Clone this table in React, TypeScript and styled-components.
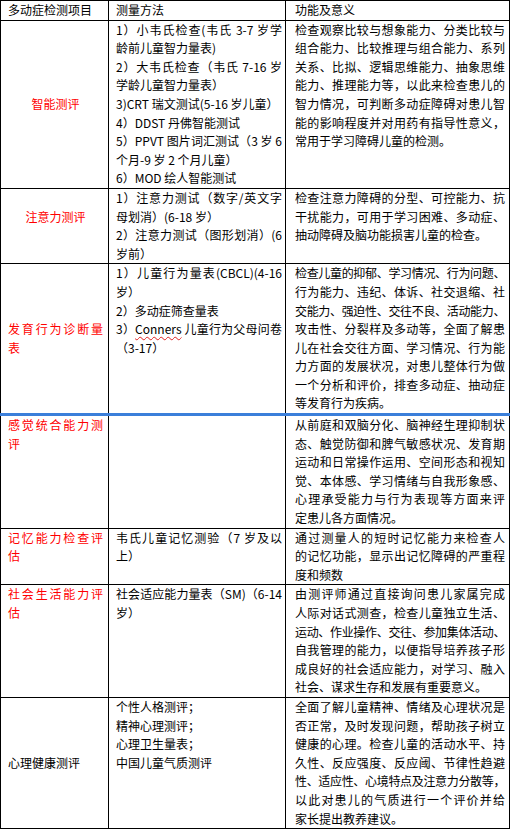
import styled, { createGlobalStyle } from "styled-components";

const LINE = 18.6;

const GlobalStyle = createGlobalStyle`
  html, body {
    margin: 0;
    padding: 0;
    background: #fff;
  }
  body {
    font-family: "Noto Sans CJK SC", "Noto Sans", sans-serif;
  }
`;

const Table = styled.table`
  width: 509px;
  table-layout: fixed;
  border-collapse: collapse;
  font-size: 12px;
  line-height: ${LINE}px;
  color: #000;
`;

const Row = styled.tr<{ $marked?: boolean }>`
  & > td {
    border-top: ${p => (p.$marked ? "3px solid #3b7fda" : "1px solid #000")};
  }
`;

const BaseCell = styled.td`
  border: 1px solid #000;
  vertical-align: top;
  padding: 0;
`;

const HeadCell = styled(BaseCell)<{ $left: number }>`
  padding-left: ${p => p.$left}px;
  white-space: nowrap;
`;

const LabelCell = styled(BaseCell)<{ $lead: number; $center?: boolean; $red?: boolean }>`
  padding: ${p => p.$lead * LINE}px 5px 0 7px;
  color: ${p => (p.$red ? "#ff0000" : "#000")};
  text-align: ${p => (p.$center ? "center" : "left")};
`;

const MethodCell = styled(BaseCell)`
  padding: 0 3px 0 7px;
`;

const MeaningCell = styled(BaseCell)`
  padding: 0 4px 0 9px;
`;

const Line = styled.span<{ $fill?: boolean; $tight?: boolean }>`
  display: block;
  text-align-last: ${p => (p.$fill ? "justify" : "inherit")};
  letter-spacing: ${p => (p.$tight ? "-0.45px" : "0")};
`;

const Misspelled = styled.span`
  text-decoration: underline wavy #e02020;
  text-decoration-thickness: 1px;
  text-underline-offset: 2px;
`;

type Para = string[];

interface Item {
  label: Para[];
  lead: number;
  center?: boolean;
  red?: boolean;
  marked?: boolean;
  method: Para[];
  meaning: Para[];
}

const items: Item[] = [
  {
    label: [["智能测评"]],
    lead: 4,
    center: true,
    red: true,
    method: [
      ["1）小韦氏检查(韦氏 3-7 岁学", "龄前儿童智力量表)"],
      ["2）大韦氏检查（韦氏 7-16 岁", "学龄儿童智力量表）"],
      ["3)CRT 瑞文测试(5-16 岁儿童）"],
      ["4）DDST 丹佛智能测试"],
      ["5）PPVT 图片词汇测试（3 岁 6", "个月-9 岁 2 个月儿童）"],
      ["6）MOD 绘人智能测试"],
    ],
    meaning: [
      [
        "检查观察比较与想象能力、分类比较与",
        "组合能力、比较推理与组合能力、系列",
        "关系、比拟、逻辑思维能力、抽象思维",
        "能力、推理能力等，以此来检查患儿的",
        "智力情况，可判断多动症障碍对患儿智",
        "能的影响程度并对用药有指导性意义，",
        "常用于学习障碍儿童的检测。",
      ],
    ],
  },
  {
    label: [["注意力测评"]],
    lead: 1,
    center: true,
    red: true,
    method: [
      ["1）注意力测试（数字/英文字", "母划消）(6-18 岁）"],
      ["2）注意力测试（图形划消）(6", "岁前）"],
    ],
    meaning: [
      [
        "检查注意力障碍的分型、可控能力、抗",
        "干扰能力，可用于学习困难、多动症、",
        "抽动障碍及脑功能损害儿童的检查。",
      ],
    ],
  },
  {
    label: [["发育行为诊断量", "表"]],
    lead: 3,
    red: true,
    method: [
      ["1）儿童行为量表(CBCL)(4-16", "岁）"],
      ["2）多动症筛查量表"],
      ["3）Conners 儿童行为父母问卷", "（3-17）"],
    ],
    meaning: [
      [
        "检查儿童的抑郁、学习情况、行为问题、",
        "行为能力、违纪、体诉、社交退缩、社",
        "交能力、强迫性、交往不良、活动能力、",
        "攻击性、分裂样及多动等，全面了解患",
        "儿在社会交往方面、学习情况、行为能",
        "力方面的发展状况，对患儿整体行为做",
        "一个分析和评价，排查多动症、抽动症",
        "等发育行为疾病。",
      ],
    ],
  },
  {
    label: [["感觉统合能力测", "评"]],
    lead: 0,
    red: true,
    marked: true,
    method: [],
    meaning: [
      [
        "从前庭和双脑分化、脑神经生理抑制状",
        "态、触觉防御和脾气敏感状况、发育期",
        "运动和日常操作运用、空间形态和视知",
        "觉、本体感、学习情绪与自我形象感、",
        "心理承受能力与行为表现等方面来评",
        "定患儿各方面情况。",
      ],
    ],
  },
  {
    label: [["记忆能力检查评", "估"]],
    lead: 0,
    red: true,
    method: [["韦氏儿童记忆测验（7 岁及以", "上）"]],
    meaning: [
      [
        "通过测量人的短时记忆能力来检查人",
        "的记忆功能，显示出记忆障碍的严重程",
        "度和频数",
      ],
    ],
  },
  {
    label: [["社会生活能力评", "估"]],
    lead: 0,
    red: true,
    method: [["社会适应能力量表（SM)（6-14", "岁）"]],
    meaning: [
      [
        "由测评师通过直接询问患儿家属完成",
        "人际对话式测查，检查儿童独立生活、",
        "运动、作业操作、交往、参加集体活动、",
        "自我管理的能力，以便指导培养孩子形",
        "成良好的社会适应能力，对学习、融入",
        "社会、谋求生存和发展有重要意义。",
      ],
    ],
  },
  {
    label: [["心理健康测评"]],
    lead: 3,
    method: [["个性人格测评；"], ["精神心理测评；"], ["心理卫生量表；"], ["中国儿童气质测评"]],
    meaning: [
      [
        "全面了解儿童精神、情绪及心理状况是",
        "否正常，及时发现问题，帮助孩子树立",
        "健康的心理。检查儿童的活动水平、持",
        "久性、反应强度、反应阈、节律性趋避",
        "性、适应性、心境特点及注意力分散等，",
        "以此对患儿的气质进行一个评价并给",
        "家长提出教养建议。",
      ],
    ],
  },
];

// "Conners" carries the word processor's spell-check squiggle
function renderText(text: string) {
  const parts = text.split("Conners");
  if (parts.length === 1) return text;
  return (
    <>
      {parts[0]}
      <Misspelled>Conners</Misspelled>
      {parts[1]}
    </>
  );
}

function Paragraphs({ paras, maxChars }: { paras: Para[]; maxChars?: number }) {
  return (
    <>
      {paras.map((para, i) =>
        para.map((line, j) => (
          <Line
            key={`${i}-${j}`}
            $fill={j < para.length - 1}
            $tight={maxChars !== undefined && line.length > maxChars}
          >
            {renderText(line)}
          </Line>
        ))
      )}
    </>
  );
}

export default function App() {
  return (
    <>
      <GlobalStyle />
      <Table>
        <colgroup>
          <col style={{ width: 108 }} />
          <col style={{ width: 177 }} />
          <col style={{ width: 224 }} />
        </colgroup>
        <tbody>
          <Row>
            <HeadCell $left={7}>多动症检测项目</HeadCell>
            <HeadCell $left={7}>测量方法</HeadCell>
            <HeadCell $left={9}>功能及意义</HeadCell>
          </Row>
          {items.map((item, i) => (
            <Row key={i} $marked={item.marked}>
              <LabelCell $lead={item.lead} $center={item.center} $red={item.red}>
                <Paragraphs paras={item.label} />
              </LabelCell>
              <MethodCell>
                <Paragraphs paras={item.method} />
              </MethodCell>
              <MeaningCell>
                <Paragraphs paras={item.meaning} maxChars={17} />
              </MeaningCell>
            </Row>
          ))}
        </tbody>
      </Table>
    </>
  );
}
